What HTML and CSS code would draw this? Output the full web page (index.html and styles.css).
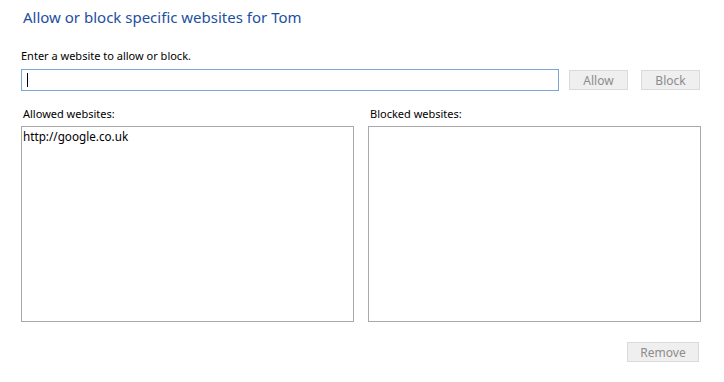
FILE: index.html
```html
<!DOCTYPE html>
<html lang="en">

<head>
    <meta charset="UTF-8">
    <meta name="viewport" content="width=device-width, initial-scale=1.0">
    <title>Allow or block websites</title>
    <link rel="stylesheet" href="styles.css">
</head>

<body>
    <div class="page">
        <h1 class="title">Allow or block specific websites for Tom</h1>

        <!-- Entrada de sitio web -->
        <label class="field-label" for="site">Enter a website to allow or block.</label>
        <div class="entry-row">
            <div class="site-input"><span class="caret"></span></div>
            <button class="btn">Allow</button>
            <button class="btn">Block</button>
        </div>

        <!-- Listas -->
        <div class="lists">
            <div class="list-col">
                <div class="list-label">Allowed websites:</div>
                <div class="list-box">
                    <div class="list-item">http://google.co.uk</div>
                </div>
            </div>
            <div class="list-col">
                <div class="list-label">Blocked websites:</div>
                <div class="list-box"></div>
            </div>
        </div>

        <div class="footer-row">
            <button class="btn btn-remove">Remove</button>
        </div>
    </div>
</body>

</html>
```

FILE: styles.css
```css
/* Reset */
* {
    margin: 0;
    padding: 0;
    box-sizing: border-box;
}

body {
    background-color: #ffffff;
    font-family: "Noto Sans", "Open Sans", sans-serif;
    color: #000000;
    font-size: 11px;
}

.page {
    width: 724px;
    padding: 6px 23px 0 21px;
}

.title {
    font-size: 15px;
    font-weight: normal;
    color: #1d4fa0;
    margin-left: 2px;
    line-height: 22px;
}

.field-label {
    display: block;
    margin-top: 20px;
    line-height: 16px;
}

.entry-row {
    display: flex;
    align-items: center;
    margin-top: 5px;
}

.site-input {
    width: 538px;
    height: 22px;
    border: 1px solid #7ca4d6;
    padding: 3px 5px;
}

.caret {
    display: block;
    width: 1px;
    height: 14px;
    background-color: #000000;
}

.btn {
    font-family: inherit;
    font-size: 12px;
    color: #8c8c8c;
    background-color: #efefef;
    border: 1px solid #dadada;
    width: 59px;
    height: 20px;
    margin-left: 10px;
    line-height: 17px;
}

.entry-row .btn + .btn {
    margin-left: 13px;
}

.lists {
    display: flex;
    gap: 14px;
    margin-top: 14px;
}

.list-col {
    width: 333px;
}

.list-label {
    margin-left: 2px;
    line-height: 18px;
    margin-bottom: 3px;
}

.list-box {
    height: 196px;
    border: 1px solid #a9a9a9;
    padding: 2px 1px;
}

.list-item {
    font-size: 11.7px;
    line-height: 15px;
}

.footer-row {
    display: flex;
    justify-content: flex-end;
    margin-top: 20px;
}

.btn-remove {
    width: 72px;
    margin-left: 0;
    margin-right: 2px;
}
```
